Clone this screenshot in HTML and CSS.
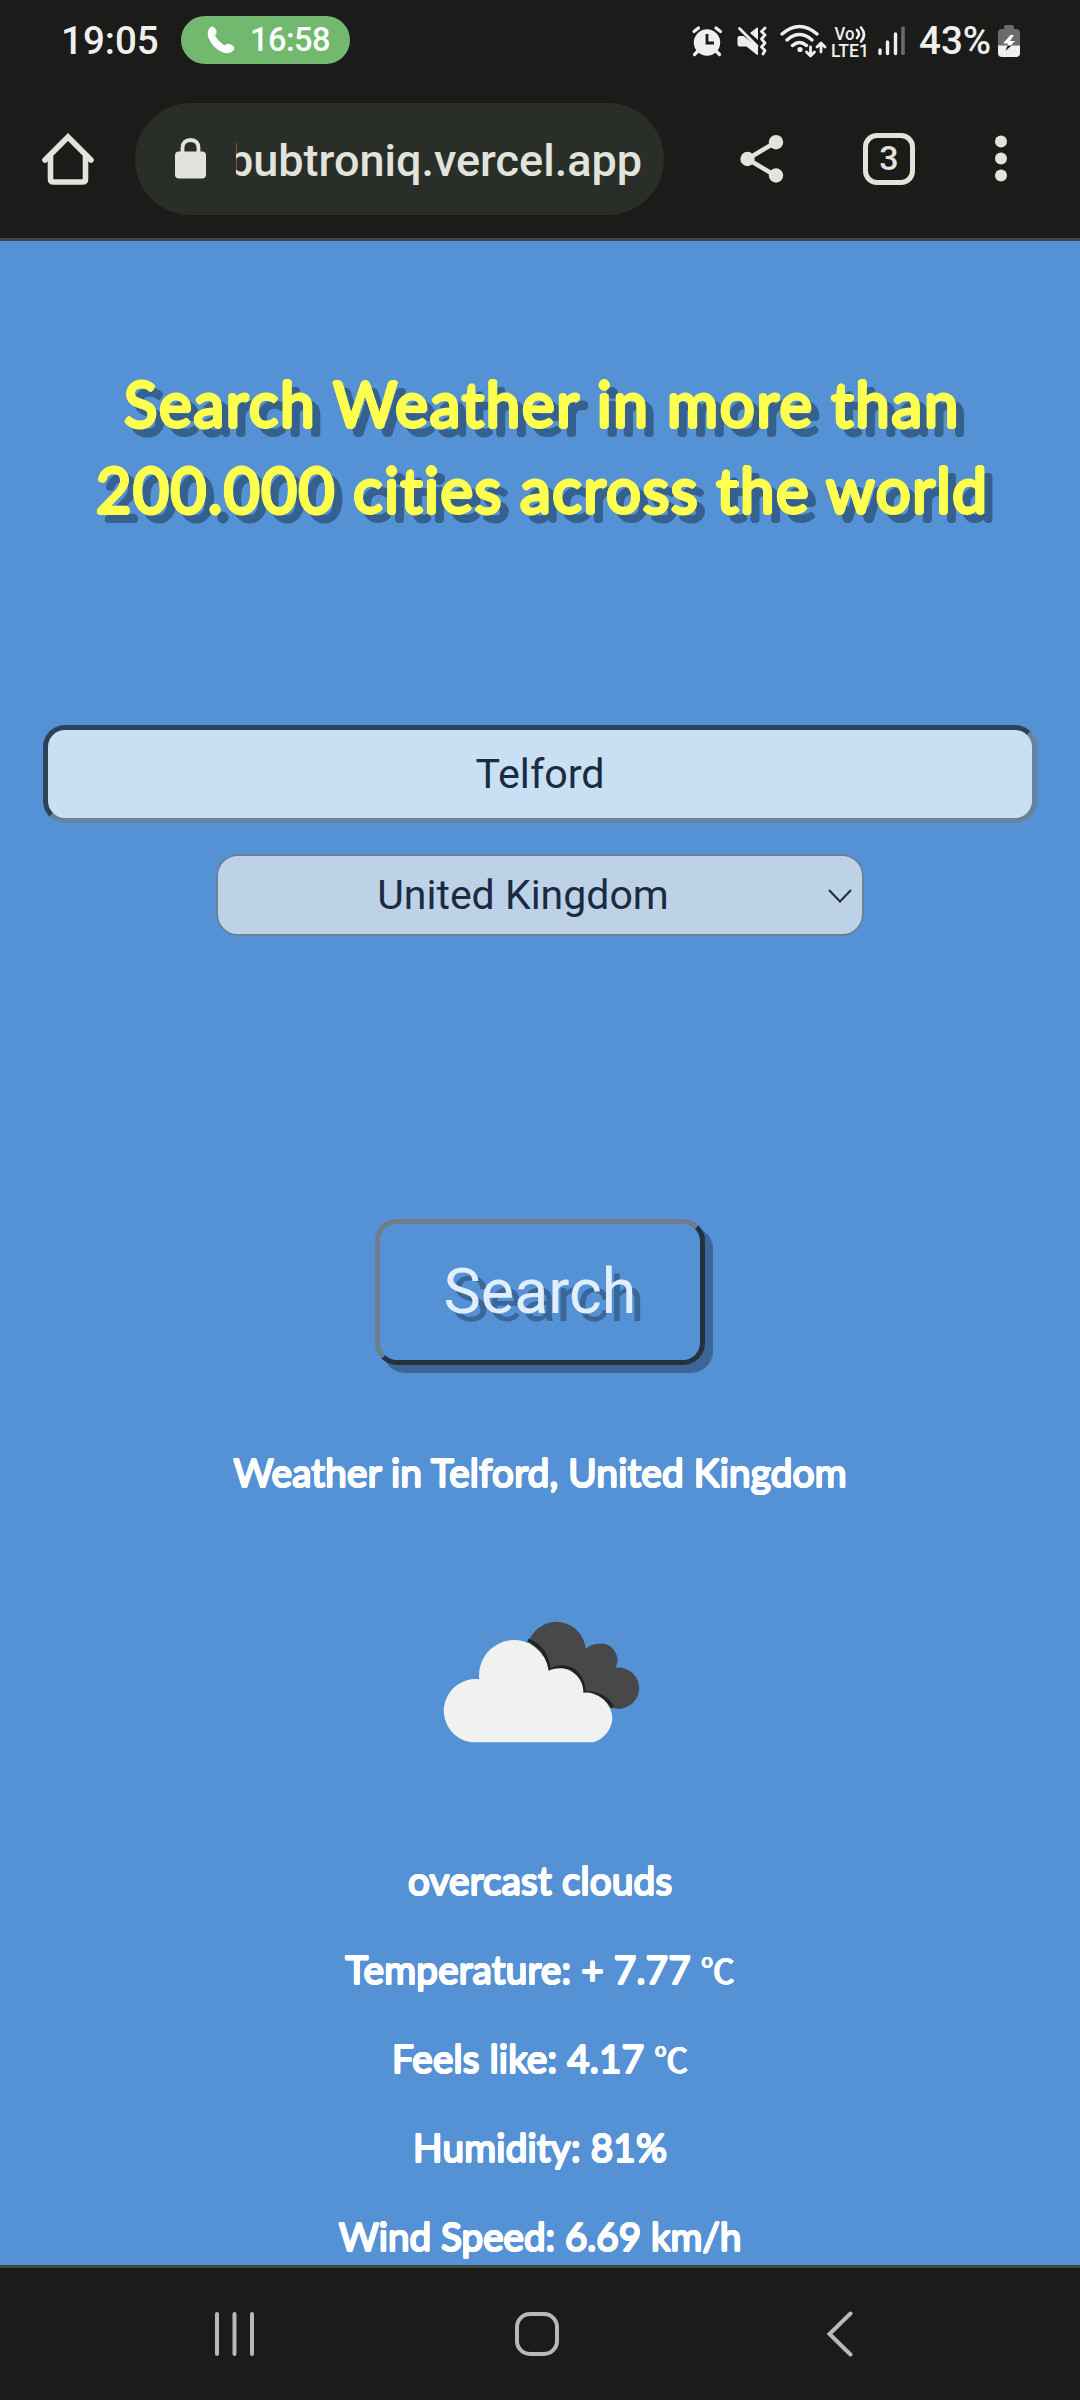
FILE: index.html
```html
<!DOCTYPE html>
<html lang="en">
<head>
<meta charset="utf-8">
<title>Weather</title>
<link rel="stylesheet" href="styles.css">
</head>
<body>
<div class="phone">
  <div class="status">
    <span class="clock">19:05</span>
    <span class="call">
      <svg width="28" height="28" viewBox="0 0 28 28"><path d="M3 1.500Q6-1 8.500 3Q11 6.500 8 9.500Q11 15 17.500 19.500Q20 16.500 24 18.500Q29 21 26.500 24.500Q23 28.500 16 26.500Q6 22.500 1.500 12Q-.5 5 3 1.500Z" fill="#fff"/></svg>
      <span class="call-time">16:58</span>
    </span>
    <svg class="sys" width="220" height="40" viewBox="0 0 220 40">
      <g fill="#efefef">
        <circle cx="16" cy="22.500" r="13.200"/>
        <path d="M7 31l-3.500 3.500M25 31l3.500 3.500M3 11.500l4.500-3.500M29.500 11.500L25 8" stroke="#efefef" stroke-width="3.200" stroke-linecap="round"/>
        <path d="M16 14v9h7" fill="none" stroke="#1b1c19" stroke-width="2.800"/>
        <path d="M46.500 18q0-2 2-2h4L67 27V34q0 1.500-1.500.5L55.500 26.500H48.500q-2 0-2-2zM59 13L66 7.500q1-.5 1 1V20z"/>
      </g>
      <g fill="none" stroke="#efefef" stroke-width="2.800" stroke-linecap="round" stroke-linejoin="round">
        <path d="M48.500 8.500L66 26"/>
        <path d="M74 8l-3.500 3.500 3.500 3.500-3.500 4 3.500 4-3.500 4 3.500 3.500-2 3.500"/>
        <path d="M91 14q17.500-15 35 0M96 20q12.500-11 25 0M101.500 25.500q7-6 14 0" stroke-width="3.400"/>
        <path d="M119.500 27v8.500m-4-3.500l4 4 4-4M130 32V23.500m-4 3.500l4-4 4 4" stroke-width="2.800"/>
      </g>
      <circle cx="109" cy="29.500" r="2.600" fill="#efefef"/>
      <text class="lte" x="143.500" y="19.500" textLength="20" lengthAdjust="spacingAndGlyphs">Vo</text>
      <path d="M166 10q4 4 0 8M170 7.500q6 7 0 14" fill="none" stroke="#efefef" stroke-width="2.600" stroke-linecap="round"/>
      <text class="lte" x="140" y="36.500" textLength="38" lengthAdjust="spacingAndGlyphs">LTE1</text>
      <path d="M189 30v3.500M196.500 22v11.500M204.500 14v19.500" stroke="#efefef" stroke-width="3.400" stroke-linecap="round"/>
      <path d="M212 8v25.500" stroke="#6b6c6a" stroke-width="3.600" stroke-linecap="round"/>
    </svg>
    <span class="percent">43%</span>
    <svg class="battery" width="22" height="32" viewBox="0 0 22 32">
      <path d="M6 4V2q0-2 2-2h6q2 0 2 2v2h2q4 0 4 4v13H0V8q0-4 4-4z" fill="#6b6c6a"/>
      <path d="M0 20.500h22V28q0 4-4 4H4q-4 0-4-4z" fill="#efefef"/>
      <path d="M12.500 10L5 18.500h5L7.500 26 17 16h-5l4-6z" fill="#fff"/>
      <path d="M9.500 20.500h4L7.500 26z" fill="#1b1c19"/>
    </svg>
  </div>

  <div class="toolbar">
    <svg class="home" width="52" height="52" viewBox="0 0 52 52"><path d="M3 27L26 4l23 23M8.500 23v23q0 3 3 3h29q3 0 3-3V23" fill="none" stroke="#e2e3dc" stroke-width="5.600" stroke-linecap="round"/></svg>
    <div class="omnibox">
      <svg width="31" height="41" viewBox="0 0 31 41"><rect y="13.500" width="31" height="27" rx="4" fill="#e2e3dc"/><path d="M7.500 15V10q0-8 8-8t8 8v5" fill="none" stroke="#e2e3dc" stroke-width="3.800"/></svg>
      <div class="url"><span>bubtroniq.vercel.app</span></div>
    </div>
    <svg class="share" width="44" height="48" viewBox="0 0 44 48"><path d="M36 7L7.500 24 36 41" fill="none" stroke="#e2e3dc" stroke-width="4.500"/><g fill="#e2e3dc"><circle cx="36" cy="7.200" r="7.200"/><circle cx="7.500" cy="24" r="7.200"/><circle cx="36" cy="40.500" r="7.200"/></g></svg>
    <span class="tabs">3</span>
    <svg class="more" width="12" height="48" viewBox="0 0 12 48"><g fill="#e2e3dc"><circle cx="6" cy="6.500" r="6"/><circle cx="6" cy="23.500" r="6"/><circle cx="6" cy="40.500" r="6"/></g></svg>
  </div>

  <main class="page">
    <h1><span class="first">Search Weather in more than</span><br><span class="second">200.000 cities across the world</span></h1>
    <input class="city" type="text" value="Telford">
    <div class="country">
      <select><option>United Kingdom</option></select>
      <svg width="26" height="16" viewBox="0 0 26 16"><path d="M2 2l11 11.500L24 2" fill="none" stroke="#1a2b42" stroke-width="2"/></svg>
    </div>
    <button class="search" type="button">Search</button>
    <p class="line place">Weather in Telford, United Kingdom</p>
    <svg class="cloud" width="240" height="180" viewBox="0 0 720 540">
      <path d="M328 150A88 88 0 0 1 497 176Q515 161 538 161A50 50 0 0 1 587 233A62 62 0 1 1 575 353L400 330z" fill="#48484a"/>
      <path d="M324 150Q384 176 387 242Q424 222 458 238Q492 262 492 308Q552 306 578 352" fill="none" stroke="#222224" stroke-width="10"/>
      <path d="M155 457A94 94 0 0 1 178 268A104 104 0 0 1 386 242A72 72 0 0 1 490 308A80 80 0 0 1 577 385A80 80 0 0 1 520 457z" fill="#f1f1ef"/>
    </svg>
    <p class="line">overcast clouds</p>
    <p class="line">Temperature: + 7.77 <span class="unit">℃</span></p>
    <p class="line">Feels like: 4.17 <span class="unit">℃</span></p>
    <p class="line">Humidity: 81%</p>
    <p class="line wind">Wind Speed: 6.69 km/h</p>
  </main>

  <div class="nav">
    <svg width="42" height="46" viewBox="0 0 42 46"><path d="M3 3v40M20.500 3v40M38 3v40" stroke="#b8b9b7" stroke-width="4" stroke-linecap="round"/></svg>
    <svg class="nav-home" width="46" height="46" viewBox="0 0 46 46"><rect x="3" y="3" width="40" height="40" rx="13" fill="none" stroke="#b8b9b7" stroke-width="4"/></svg>
    <svg class="nav-back" width="28" height="46" viewBox="0 0 28 46"><path d="M24.500 2.500L3.500 23l21 20.500" fill="none" stroke="#b8b9b7" stroke-width="4" stroke-linecap="round"/></svg>
  </div>
</div>
</body>
</html>
```
FILE: styles.css
```css
* { box-sizing: border-box; }
body { margin: 0; background: #1b1c19; font-family: Roboto, "Liberation Sans", sans-serif; }
svg { display: block; flex: none; }
.phone { width: 1080px; height: 2400px; display: flex; flex-direction: column; overflow: hidden; }

.status { height: 79px; flex: none; display: flex; align-items: flex-start; color: #efefef; }
.clock { margin: 18px 0 0 61px; width: 120px; font-size: 38.5px; line-height: 45px; font-weight: 500; }
.call { margin-top: 16px; width: 169px; height: 48px; border-radius: 24px; background: #72b96f; display: flex; align-items: center; padding-left: 26px; color: #fff; }
.call-time { margin-left: 15px; font-size: 32.500px; font-weight: 500; letter-spacing: -.5px; }
.sys { margin: 20px 0 0 341px; }
.lte { font-family: Roboto, sans-serif; font-weight: 500; font-size: 18px; fill: #efefef; }
.percent { margin: 18px 0 0 8px; width: 79px; font-size: 38.5px; line-height: 45px; font-weight: 500; }
.battery { margin-top: 25px; }

.toolbar { height: 162px; flex: none; border-bottom: 3px solid #3f4a45; display: flex; align-items: center; padding: 0 0 0 42px; }
.omnibox { width: 529px; height: 112px; margin-left: 41px; border-radius: 56px; background: #2a2e28; display: flex; align-items: center; padding-left: 40px; }
.url { margin: 4px 0 0 30px; width: 406px; overflow: hidden; display: flex; justify-content: flex-end; white-space: nowrap; color: #e2e3dc; font-size: 45px; line-height: 60px; font-weight: 500; }
.share { margin-left: 76px; }
.tabs { margin-left: 79px; width: 52px; height: 52px; border: 5.500px solid #e2e3dc; border-radius: 14px; color: #e2e3dc; font-size: 34px; line-height: 41px; font-weight: 500; text-align: center; }
.more { margin-left: 80px; }

.page { flex: none; height: 2024px; overflow: hidden; background: #5491d5; display: flex; flex-direction: column; align-items: center; }
.page > * { flex: none; }
h1 { margin: 119px 0 0; padding-left: 4px; font-family: Lato, sans-serif; font-weight: 400; font-size: 62px; line-height: 86px; color: #ffff4f; text-align: center; white-space: nowrap;
  text-shadow: 1.700px 0 0, -1.700px 0 0, 0 1.700px 0, 0 -1.700px 0, 1.200px 1.200px 0, -1.200px 1.200px 0, 1.200px -1.200px 0, -1.200px -1.200px 0;
  filter: drop-shadow(8px 8px 0 #36618f); }
.first { letter-spacing: 1.650px; }
.second { letter-spacing: 1.400px; }
.city { margin: 193px 0 0; width: 994px; height: 98px; border: 5px solid; border-color: #2b4259 #69829b #69829b #2b4259; border-radius: 22px; background: #c9dff3; color: #1a2b42; font: 41.250px Roboto, sans-serif; text-align: center; outline: none; padding: 0; }
.country { position: relative; margin-top: 31px; width: 648px; height: 82px; }
.country select { appearance: none; width: 100%; height: 100%; border: 2px solid #69829b; border-radius: 22px; background: #bdd1e7; color: #1a2b42; font: 41px Roboto, sans-serif; text-align: center; text-align-last: center; padding: 0 34px 0 0; }
.country svg { position: absolute; right: 11px; top: 34px; }
.search { margin-top: 283px; width: 330px; height: 146px; border: 5px solid; border-color: #6f7c89 #25323f #25323f #6f7c89; border-radius: 22px; background: #5491d5; box-shadow: 8px 8px 0 #3a6797; color: #e1eefb; font: 62.800px Roboto, sans-serif; text-shadow: 8px 8px 0 #3a6797; padding: 0 0 2px; }
.line { margin: 0; height: 89px; font-family: Lato, sans-serif; font-size: 39px; line-height: 90px; color: #fff; white-space: nowrap;
  text-shadow: .9px 0 0, -.9px 0 0, 0 .9px 0, 0 -.9px 0, .6px .6px 0, -.6px .6px 0, .6px -.6px 0, -.6px -.6px 0; }
.place { margin-top: 62px; }
.wind { letter-spacing: -.2px; }
.unit { font-family: Roboto, "Noto Sans CJK JP", sans-serif; font-size: 34px; font-weight: 500; text-shadow: .5px 0 0, -.5px 0 0; }
.cloud { margin: 74px 0 65px; }

.nav { flex: none; height: 135px; border-top: 3px solid #3f4a45; display: flex; padding: 43px 0 0 214px; }
.nav-home { margin-left: 258px; }
.nav-back { margin-left: 266px; }
```
